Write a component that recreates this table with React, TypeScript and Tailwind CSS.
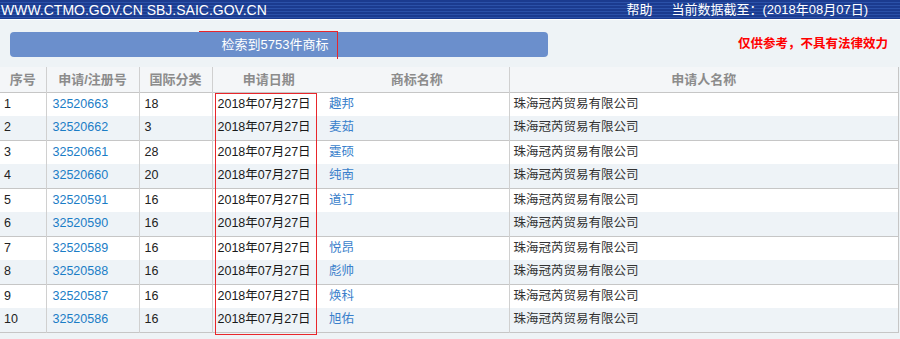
const rows = [
  { no: 1, reg: "32520663", cls: "18", name: "趣邦" },
  { no: 2, reg: "32520662", cls: "3", name: "麦茹" },
  { no: 3, reg: "32520661", cls: "28", name: "霆硕" },
  { no: 4, reg: "32520660", cls: "20", name: "纯南" },
  { no: 5, reg: "32520591", cls: "16", name: "道订" },
  { no: 6, reg: "32520590", cls: "16", name: "" },
  { no: 7, reg: "32520589", cls: "16", name: "悦昂" },
  { no: 8, reg: "32520588", cls: "16", name: "彪帅" },
  { no: 9, reg: "32520587", cls: "16", name: "焕科" },
  { no: 10, reg: "32520586", cls: "16", name: "旭佑" },
];

const APPLICANT = "珠海冠芮贸易有限公司";
const DATE = "2018年07月27日";

export default function App() {
  return (
    <div className="relative w-[900px] h-[339px] overflow-hidden bg-[#eef3f6] font-['Liberation_Sans','Noto_Sans_CJK_SC',sans-serif]">
      {/* top strip */}
      <div className="h-[19px] flex items-center text-white bg-[repeating-linear-gradient(to_bottom,#1b3b8f_0px,#1b3b8f_2px,#2b51a8_2px,#2b51a8_3px)]">
        <span className="text-[14px] leading-none pl-[1px]">WWW.CTMO.GOV.CN SBJ.SAIC.GOV.CN</span>
        <div className="ml-auto flex items-center gap-[19px] pr-[32px] text-[13px] leading-none">
          <span>帮助</span>
          <span>当前数据截至：(2018年08月07日)</span>
        </div>
      </div>
      <div className="h-px bg-white" />

      {/* result bar */}
      <div className="flex items-center pl-[10px] pr-[12px] mt-[12px] h-[25px]">
        <div className="w-[538px] h-[25px] rounded-[4px] bg-[#6b8fcc] flex items-center justify-center text-white text-[13px] pr-[8px]">
          检索到5753件商标
        </div>
        <span className="ml-auto text-[#ff0000] font-bold text-[12.5px]">仅供参考，不具有法律效力</span>
      </div>

      {/* table */}
      <table className="mt-[10px] w-[899px] table-fixed border-collapse border-r border-[#c6c6c6] text-[12.5px]">
        <colgroup>
          <col className="w-[46px]" />
          <col className="w-[93px]" />
          <col className="w-[73px]" />
          <col className="w-[113px]" />
          <col className="w-[184px]" />
          <col />
        </colgroup>
        <thead>
          <tr className="h-[25px] bg-[#f4f6f8] text-[#8c8c8c] font-bold text-[13px] border-b border-[#c6c6c6]">
            <th className="border-r border-[#d0d0d0] font-bold">序号</th>
            <th className="border-r border-[#d0d0d0] font-bold">申请/注册号</th>
            <th className="border-r border-[#d0d0d0] font-bold">国际分类</th>
            <th className="font-bold">申请日期</th>
            <th className="border-r border-[#d0d0d0] font-bold">商标名称</th>
            <th className="font-bold">申请人名称</th>
          </tr>
        </thead>
        <tbody>
          {rows.map((r, i) => (
            <tr
              key={r.no}
              className={`h-[24px] ${i % 2 === 1 ? "bg-[#eef3f7] border-b border-[#c6c6c6]" : "bg-white"}`}
            >
              <td className="border-r border-[#d0d0d0] pl-[4px] text-[#222]">{r.no}</td>
              <td className="border-r border-[#d0d0d0] pl-[6px] text-[#1b7dc6]">{r.reg}</td>
              <td className="border-r border-[#d0d0d0] pl-[5px] text-[#222]">{r.cls}</td>
              <td className="pl-[5px] text-[#1a1a1a]">{DATE}</td>
              <td className="border-r border-[#d0d0d0] pl-[4px] text-[#3a7fcb]">{r.name}</td>
              <td className="pl-[4px] text-[#333]">{APPLICANT}</td>
            </tr>
          ))}
        </tbody>
      </table>

      {/* red annotation marks */}
      <div className="absolute left-[199px] top-[31px] w-[139px] h-[28px] border-t border-r border-[#e8262b]" />
      <div className="absolute left-[215px] top-[93px] w-[102px] h-[242px] border border-[#e8262b]" />
    </div>
  );
}
